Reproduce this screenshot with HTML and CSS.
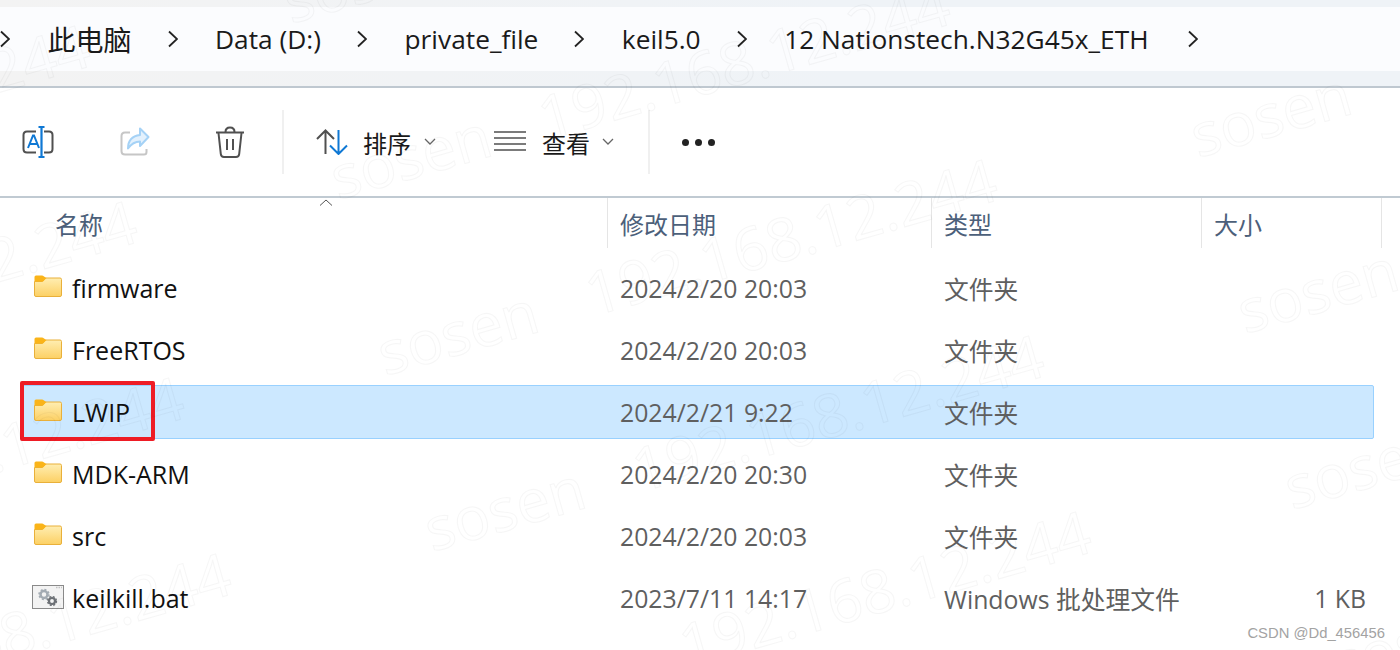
FILE: index.html
```html
<!DOCTYPE html>
<html lang="en">

<head>
    <meta charset="UTF-8">
    <title>keil5.0 - Explorer</title>
    <link rel="stylesheet" href="styles.css">
</head>

<body>
    <svg width="0" height="0" class="defs">
        <defs>
            <symbol id="folder" viewBox="0 0 28 22">
                <path d="M.5 6.500h8l3-3.500H26q1.500 0 1.500 1.500V20q0 1.500-1.500 1.500H2Q.5 21.500.5 20z" fill="url(#folderFill)" stroke="#e9b03a" stroke-width="1" />
                <path d="M.5 6.500V2Q.5.5 2 .5h6q1 0 2 1l2.500 1.500-3.500 3.500z" fill="#fab419" />
            </symbol>
            <linearGradient id="folderFill" x1="0" y1="0" x2="0" y2="1">
                <stop offset="0" stop-color="#ffeeb2" />
                <stop offset="1" stop-color="#fcd064" />
            </linearGradient>
            <g id="mark">
                <text x="0" y="0" transform="rotate(-16)">sosen</text>
                <text x="216" y="0" transform="rotate(-16)">192.168.12.244</text>
            </g>
        </defs>
    </svg>

    <div class="address-band">
        <nav class="address-bar">
            <svg class="crumb-arrow first" viewBox="0 0 10 18"><path d="M1 1.500 9 9l-8 7.500" /></svg>
            <span class="crumb crumb-cjk">此电脑</span>
            <svg class="crumb-arrow" viewBox="0 0 10 18"><path d="M1 1.500 9 9l-8 7.500" /></svg>
            <span class="crumb">Data (D:)</span>
            <svg class="crumb-arrow" viewBox="0 0 10 18"><path d="M1 1.500 9 9l-8 7.500" /></svg>
            <span class="crumb">private_file</span>
            <svg class="crumb-arrow" viewBox="0 0 10 18"><path d="M1 1.500 9 9l-8 7.500" /></svg>
            <span class="crumb">keil5.0</span>
            <svg class="crumb-arrow" viewBox="0 0 10 18"><path d="M1 1.500 9 9l-8 7.500" /></svg>
            <span class="crumb">12 Nationstech.N32G45x_ETH</span>
            <svg class="crumb-arrow last" viewBox="0 0 10 18"><path d="M1 1.500 9 9l-8 7.500" /></svg>
        </nav>
    </div>

    <div class="toolbar">
        <svg class="tool-icon rename" viewBox="0 0 32 32">
            <path d="M14 5.500H5q-3.500 0-3.500 3.500v14q0 3.500 3.500 3.500h9M22 5.500h5q3.500 0 3.500 3.500v14q0 3.500-3.500 3.500h-5" fill="none" stroke="#505050" stroke-width="2" />
            <path d="M6 22 11 9.500h1L17 22M7.800 18h7.400" fill="none" stroke="#0f78d4" stroke-width="2" />
            <path d="M16.500 1h6M19.500 1v30M16.500 31h6" fill="none" stroke="#0f78d4" stroke-width="2.200" />
        </svg>
        <svg class="tool-icon share" viewBox="0 0 30 30">
            <path d="M10 5.500H5Q1.500 5.500 1.500 9v15Q1.500 27.500 5 27.500h19q2.500 0 2.500-2.500v-3" fill="none" stroke="#c6c6c6" stroke-width="2" />
            <path d="M20 1.500 28.500 10 20 19v-4.500q-7 0-12 7 0-12 12-13.500z" fill="#e3f1fd" stroke="#a5d2f6" stroke-width="2" stroke-linejoin="round" />
        </svg>
        <svg class="tool-icon trash" viewBox="0 0 30 32">
            <path d="M1 6.500h28M10.500 6q0-4.500 4.500-4.500T19.500 6" fill="none" stroke="#505050" stroke-width="2" />
            <path d="M3.500 7l2.300 21q.3 3 3.200 3h12q2.900 0 3.200-3L26.500 7" fill="none" stroke="#505050" stroke-width="2" />
            <path d="M12 13v11M18 13v11" fill="none" stroke="#505050" stroke-width="2" />
        </svg>
        <span class="tool-divider"></span>
        <button class="tool-button sort-button">
            <svg class="sort-icon" viewBox="0 0 32 26">
                <path d="M1 10 9.500 1.500 18 10M9.500 2v23" fill="none" stroke="#505050" stroke-width="2" />
                <path d="M14 16.500 22.500 25 31 16.500M22.500 1v23" fill="none" stroke="#0f78d4" stroke-width="2" />
            </svg>
            <span class="tool-label">排序</span>
            <svg class="small-chevron" viewBox="0 0 12 7"><path d="M1 1l5 5 5-5" /></svg>
        </button>
        <button class="tool-button view-button">
            <svg class="lines-icon" viewBox="0 0 32 20">
                <path d="M0 1h32M0 7h32M0 13h32M0 19h32" stroke="#505050" stroke-width="1.700" fill="none" />
            </svg>
            <span class="tool-label">查看</span>
            <svg class="small-chevron" viewBox="0 0 12 7"><path d="M1 1l5 5 5-5" /></svg>
        </button>
        <span class="tool-divider second"></span>
        <div class="more-dots"><i></i><i></i><i></i></div>
    </div>

    <div class="column-header">
        <div class="col-title name-title">名称
            <svg class="sort-caret" viewBox="0 0 14 7"><path d="M1 6.500 7 1l6 5.500" /></svg>
        </div>
        <div class="col-title">修改日期</div>
        <div class="col-title">类型</div>
        <div class="col-title">大小</div>
    </div>

    <div class="file-list">
        <div class="file-row">
            <div class="file-name"><svg class="folder-icon"><use href="#folder" /></svg>firmware</div>
            <div class="file-meta">2024/2/20 20:03</div>
            <div class="file-meta">文件夹</div>
            <div class="file-meta file-size"></div>
        </div>
        <div class="file-row">
            <div class="file-name"><svg class="folder-icon"><use href="#folder" /></svg>FreeRTOS</div>
            <div class="file-meta">2024/2/20 20:03</div>
            <div class="file-meta">文件夹</div>
            <div class="file-meta file-size"></div>
        </div>
        <div class="file-row selected">
            <div class="file-name"><svg class="folder-icon"><use href="#folder" /></svg>LWIP</div>
            <div class="file-meta">2024/2/21 9:22</div>
            <div class="file-meta">文件夹</div>
            <div class="file-meta file-size"></div>
            <span class="red-box"></span>
        </div>
        <div class="file-row">
            <div class="file-name"><svg class="folder-icon"><use href="#folder" /></svg>MDK-ARM</div>
            <div class="file-meta">2024/2/20 20:30</div>
            <div class="file-meta">文件夹</div>
            <div class="file-meta file-size"></div>
        </div>
        <div class="file-row">
            <div class="file-name"><svg class="folder-icon"><use href="#folder" /></svg>src</div>
            <div class="file-meta">2024/2/20 20:03</div>
            <div class="file-meta">文件夹</div>
            <div class="file-meta file-size"></div>
        </div>
        <div class="file-row">
            <div class="file-name">
                <svg class="bat-icon" viewBox="0 0 32 24">
                    <rect x=".5" y=".5" width="31" height="23" fill="#f3f3f3" stroke="#8a8a8a" />
                    <path d="M24 2.500h6" stroke="#c4c4c4" stroke-width="1.500" stroke-dasharray="1.500 1" />
                    <circle cx="12" cy="9.500" r="3.500" fill="none" stroke="#a3abb3" stroke-width="2.500" />
                    <circle cx="12" cy="9.500" r="5" fill="none" stroke="#a3abb3" stroke-width="1.500" stroke-dasharray="2 1.900" />
                    <circle cx="20" cy="16" r="3" fill="none" stroke="#6c7075" stroke-width="2.200" />
                    <circle cx="20" cy="16" r="4.400" fill="none" stroke="#6c7075" stroke-width="1.400" stroke-dasharray="2 1.500" />
                </svg>keilkill.bat
            </div>
            <div class="file-meta">2023/7/11 14:17</div>
            <div class="file-meta">Windows 批处理文件</div>
            <div class="file-meta file-size">1 KB</div>
        </div>
    </div>

    <!-- faint tiled watermark over the whole shot -->
    <svg class="watermark" width="1400" height="650">
        <use href="#mark" x="291" y="24" />
        <use href="#mark" x="338" y="200" />
        <use href="#mark" x="385" y="376" />
        <use href="#mark" x="432" y="552" />
        <use href="#mark" x="479" y="728" />
        <use href="#mark" x="1151" y="-18" />
        <use href="#mark" x="1198" y="158" />
        <use href="#mark" x="1245" y="334" />
        <use href="#mark" x="1292" y="510" />
        <use href="#mark" x="1339" y="686" />
        <use href="#mark" x="-569" y="66" />
        <use href="#mark" x="-522" y="242" />
        <use href="#mark" x="-475" y="418" />
        <use href="#mark" x="-428" y="594" />
        <use href="#mark" x="-381" y="770" />
    </svg>

    <div class="csdn-mark">CSDN @Dd_456456</div>
</body>

</html>
```

FILE: styles.css
```css
* {
    box-sizing: border-box;
}

body {
    position: relative;
    width: 1400px;
    height: 650px;
    margin: 0;
    overflow: hidden;
    background-color: #fff;
    font-family: "Open Sans", "Noto Sans CJK SC", sans-serif;
}

.defs {
    position: absolute;
}

/* address bar */
.address-band {
    height: 88px;
    padding-top: 7px;
    background: linear-gradient(90deg, #f3f3f3, #eff3f7 60%);
    border-bottom: 2px solid #bfc8d0;
}

.address-bar {
    display: flex;
    align-items: center;
    height: 64px;
    background-color: #fbfcfe;
    color: #1a1a1a;
}

.crumb {
    font-size: 26.3px;
    white-space: nowrap;
}

.crumb-cjk {
    font-size: 28px;
}

.crumb-arrow {
    flex: none;
    width: 10px;
    height: 18px;
    margin: 0 37.5px 0 36px;
    fill: none;
    stroke: #222;
    stroke-width: 1.800;
}

.crumb-arrow.first {
    margin-left: 0;
}

.crumb-arrow.last {
    margin-left: 39px;
}

/* command bar */
.toolbar {
    display: flex;
    align-items: center;
    height: 110px;
    border-bottom: 2px solid #c0cad2;
}

.tool-icon {
    flex: none;
}

.rename {
    width: 32px;
    height: 32px;
    margin-left: 22px;
}

.share {
    width: 30px;
    height: 30px;
    margin-left: 66px;
}

.trash {
    width: 30px;
    height: 32px;
    margin-left: 65px;
}

.tool-divider {
    width: 2px;
    height: 64px;
    margin-left: 37px;
    background-color: #f0f0f0;
}

.tool-divider.second {
    margin-left: 34px;
}

.tool-button {
    display: flex;
    align-items: center;
    padding: 0;
    border: none;
    background: none;
    font-family: inherit;
    color: #1a1a1a;
}

.sort-button {
    margin-left: 32px;
}

.sort-button .tool-label {
    margin-left: 15px;
    margin-right: 1px;
}

.view-button {
    margin-left: 58px;
}

.sort-icon {
    width: 32px;
    height: 26px;
}

.lines-icon {
    width: 32px;
    height: 20px;
    margin-top: -2px;
}

.tool-label {
    margin-left: 16px;
    margin-top: 3px;
    font-size: 24px;
    line-height: 30px;
}

.small-chevron {
    width: 12px;
    height: 7px;
    margin-left: 12px;
    margin-top: -2px;
    fill: none;
    stroke: #666;
    stroke-width: 1.300;
}

.more-dots {
    display: flex;
    gap: 6px;
    margin-left: 32px;
}

.more-dots i {
    width: 7px;
    height: 7px;
    border-radius: 50%;
    background-color: #222;
}

/* columns */
.column-header,
.file-row {
    display: grid;
}

.column-header {
    grid-template-columns: 608px 324px 270px 180px;
    height: 50px;
}

.col-title {
    position: relative;
    display: flex;
    align-items: center;
    padding-left: 12px;
    border-right: 1px solid #e5e5e5;
    font-size: 24px;
    color: #4c607a;
}

.name-title {
    padding-left: 55px;
}

.sort-caret {
    position: absolute;
    left: 319px;
    top: 1px;
    width: 14px;
    height: 7px;
    fill: none;
    stroke: #555;
    stroke-width: 1;
}

.file-list {
    padding-top: 13px;
}

.file-row {
    position: relative;
    grid-template-columns: 597px 324px 269px 160px;
    align-items: center;
    height: 54px;
    margin: 0 26px 8px 22px;
    border: 1px solid transparent;
}

.file-row.selected {
    background-color: #cce8ff;
    border-color: #99d1ff;
    border-radius: 2px;
}

.file-name {
    display: flex;
    align-items: center;
    padding-left: 11px;
    font-size: 25px;
    color: #111;
}

.folder-icon {
    flex: none;
    width: 28px;
    height: 22px;
    margin-right: 10px;
    margin-top: -4px;
}

.bat-icon {
    flex: none;
    width: 32px;
    height: 24px;
    margin-left: -2px;
    margin-right: 8px;
    margin-top: -2px;
}

.file-meta {
    font-size: 24.8px;
    color: #5f5f5f;
    white-space: nowrap;
}

.file-size {
    padding-right: 7px;
    text-align: right;
}

.red-box {
    position: absolute;
    left: -3px;
    top: -5px;
    width: 135px;
    height: 60px;
    border: 4px solid #ee1c25;
    border-radius: 2px;
}

/* overlays */
.watermark {
    position: absolute;
    left: 0;
    top: 0;
    pointer-events: none;
    font-family: "Open Sans", sans-serif;
    font-size: 60px;
    fill: none;
    stroke: rgba(0, 0, 0, 0.035);
    stroke-width: 1.200;
}

.csdn-mark {
    position: absolute;
    right: 15px;
    bottom: 9px;
    font-family: "Liberation Sans", sans-serif;
    font-size: 14.8px;
    color: #a3a3a3;
}
```
